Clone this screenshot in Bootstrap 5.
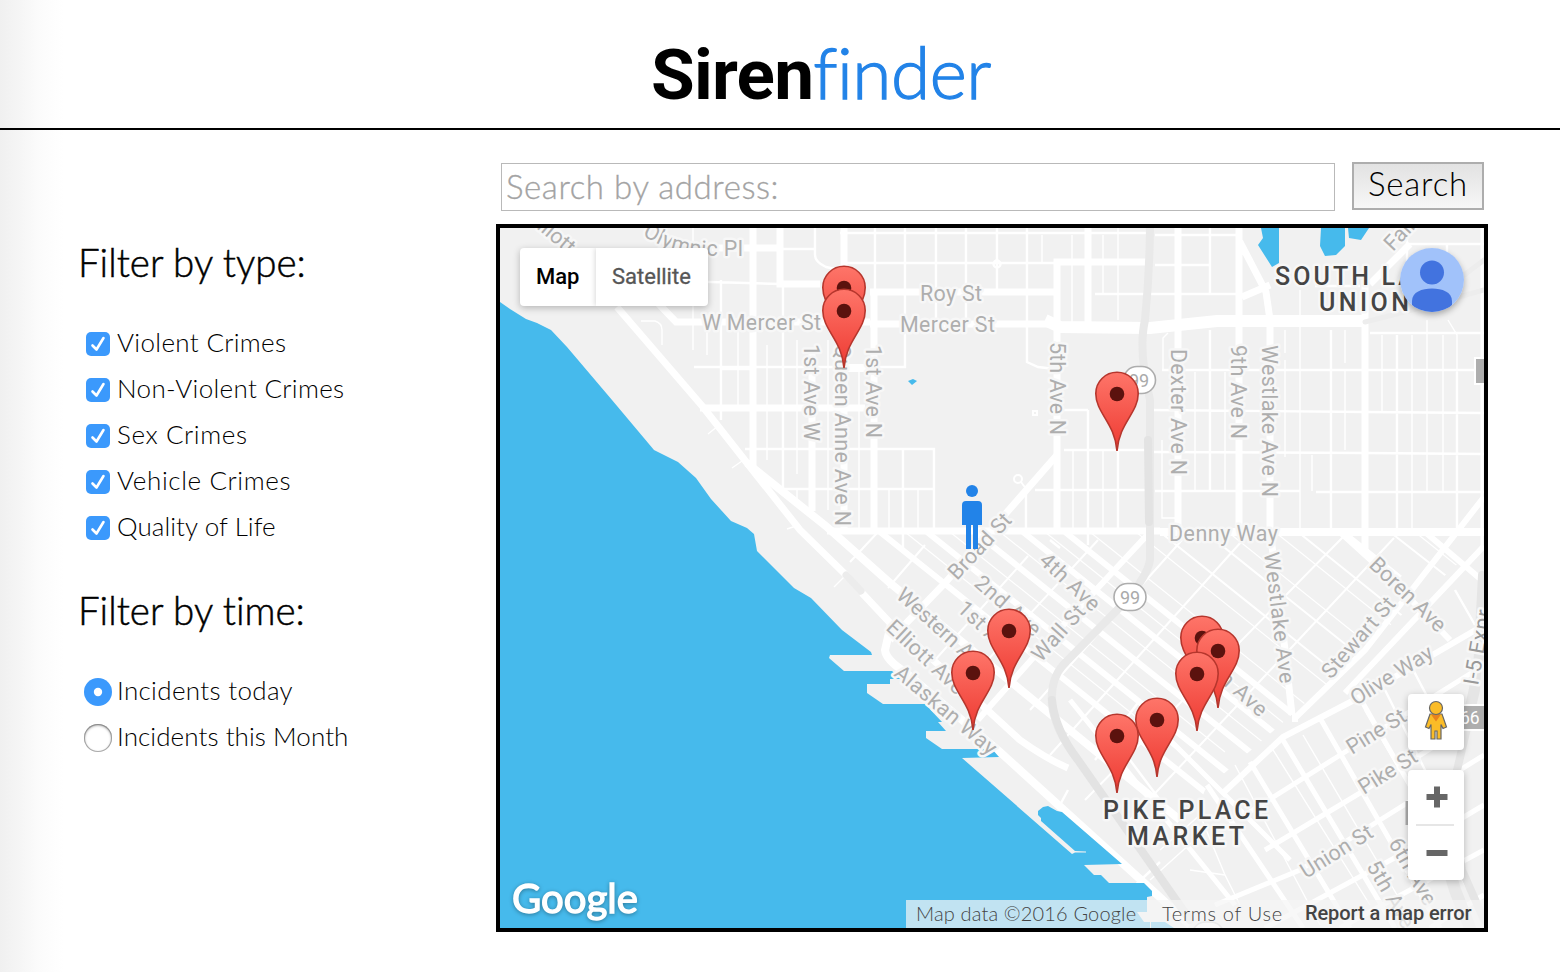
<!DOCTYPE html>
<html lang="en">
<head>
<meta charset="utf-8">
<meta name="viewport" content="width=device-width, initial-scale=1">
<title>Sirenfinder</title>
<link href="https://cdn.jsdelivr.net/npm/bootstrap@5.3.0/dist/css/bootstrap.min.css" rel="stylesheet">
<style>
  body{font-family:Lato,"Liberation Sans",sans-serif;font-weight:300;color:#000;height:972px;overflow:hidden;
    background:linear-gradient(90deg,#f0f0f0 0,#f5f5f5 18px,#fbfbfb 38px,#fff 64px)}
  .site-head{height:130px;border-bottom:2px solid #000;padding:30px 0 0 82px}
  .logo{font-size:71px;line-height:84px;white-space:nowrap}
  .logo b{font-family:Roboto,sans-serif;font-weight:700;letter-spacing:-.75px}
  .logo span{color:#2283e8;letter-spacing:-.4px;-webkit-text-stroke:1.3px #2283e8}
  .filters{width:496px;padding:107px 0 0 78px}
  .filters h2{font-size:38.5px;font-weight:300;line-height:50px;margin:0;letter-spacing:0;font-variant-ligatures:none;-webkit-text-stroke:.5px #000}
  .opts{padding:32px 0 0 6px}
  .opts + h2{margin-top:36px}
  .opt{height:46px;font-size:26px;line-height:46px;gap:5px;white-space:nowrap}
  .opt span{letter-spacing:.33px}
  .opt .wide{letter-spacing:.62px}
  .opt .tight{letter-spacing:.07px}
  .opt .form-check-input{width:24px;height:24px;margin:4px 2px 0;border:0;border-radius:5px;flex:none}
  .opt .form-check-input:checked{background-color:#3b99fc;background-size:24px 24px;
    background-image:url("data:image/svg+xml,%3Csvg xmlns='http://www.w3.org/2000/svg' viewBox='0 0 24 24'%3E%3Cpath d='M6.500 13.500l4 4L17.500 6' fill='none' stroke='%23fff' stroke-width='2.600' stroke-linecap='round' stroke-linejoin='round'/%3E%3C/svg%3E")}
  .opt .form-check-input[type=radio]{width:28px;height:28px;margin:4px 0 0;border-radius:50%;box-shadow:inset 0 1px 3px #777,inset 0 0 0 1px #b5b5b5}
  .opt .form-check-input[type=radio]:checked{box-shadow:none;background-size:28px 28px;
    background-image:url("data:image/svg+xml,%3Csvg xmlns='http://www.w3.org/2000/svg' viewBox='0 0 28 28'%3E%3Ccircle cx='14' cy='14' r='4.2' fill='%23fff'/%3E%3C/svg%3E")}
  .main-col{width:992px;padding-top:32px}
  .search-row{padding:0 4px 0 5px;height:62px}
  .search-row .form-control{width:834px;height:48px;margin-top:1px;border:1px solid #b9b9b9;border-radius:0;padding:0 4px 3px 4px;font-size:33px;font-weight:300;line-height:43px;letter-spacing:.57px;background:#fff}
  .search-row .form-control::placeholder{color:#a3a3a3;opacity:1;-webkit-text-stroke:.3px #a3a3a3}
  .search-row .btn{width:132px;height:48px;border:2px solid #adadad;border-radius:0;padding:0 0 5px;font-size:33px;font-weight:300;line-height:37px;letter-spacing:.8px;color:#000;background:linear-gradient(#e2e2e2,#f7f7f7)}
  .map-box{height:708px;border:4px solid #000;background:#f1f1f1}
  .street-map{display:block;width:984px;height:700px;font-weight:400}
  .map-type{left:20px;top:20px;height:58px;font-family:Roboto,sans-serif;font-size:22px;font-weight:500;line-height:57px;box-shadow:0 2px 7px rgba(0,0,0,.25);border-radius:4px;overflow:hidden;background:#fff}
  .map-type div:first-child{width:76px;padding-left:16px}
  .map-type div:last-child{width:112px;padding-left:16px;color:#565656;font-weight:400;-webkit-text-stroke:.3px #565656;box-shadow:-1px 0 5px rgba(0,0,0,.15)}
  .ctl{right:20px;width:56px;background:#fff;border-radius:4px;box-shadow:0 2px 7px rgba(0,0,0,.25)}
  .peg{top:466px;height:56px}
  .zoomer{top:542px;height:110px}
  .face{right:20px;top:20px;width:64px;height:64px;border-radius:50%;box-shadow:0 3px 6px rgba(0,0,0,.3);overflow:hidden}
  .credits{right:0;bottom:0;height:28px;font-size:20px;line-height:26px;color:#444;white-space:nowrap}
  .credits > div{background:rgba(245,245,245,.7);padding-left:10px}
  .c1{width:241px;letter-spacing:.15px}
  .c2{width:146px;padding-left:15px!important;letter-spacing:.7px}
  .c3{width:191px;padding-left:12px!important;font-family:Roboto,sans-serif;font-weight:500;letter-spacing:-.1px}
</style>
</head>
<body>
<header class="site-head text-center">
  <div class="logo"><b>Siren</b><span>finder</span></div>
</header>
<div class="d-flex">
  <aside class="filters flex-shrink-0">
    <h2>Filter by type:</h2>
    <div class="opts">
      <label class="opt d-flex align-items-center"><input class="form-check-input" type="checkbox" checked><span>Violent Crimes</span></label>
      <label class="opt d-flex align-items-center"><input class="form-check-input" type="checkbox" checked><span>Non-Violent Crimes</span></label>
      <label class="opt d-flex align-items-center"><input class="form-check-input" type="checkbox" checked><span class="wide">Sex Crimes</span></label>
      <label class="opt d-flex align-items-center"><input class="form-check-input" type="checkbox" checked><span class="wide">Vehicle Crimes</span></label>
      <label class="opt d-flex align-items-center"><input class="form-check-input" type="checkbox" checked><span class="tight">Quality of Life</span></label>
    </div>
    <h2>Filter by time:</h2>
    <div class="opts">
      <label class="opt d-flex align-items-center"><input class="form-check-input" type="radio" name="t" checked><span>Incidents today</span></label>
      <label class="opt d-flex align-items-center"><input class="form-check-input" type="radio" name="t"><span class="tight">Incidents this Month</span></label>
    </div>
  </aside>
  <main class="main-col flex-shrink-0">
    <form class="search-row d-flex justify-content-between align-items-start">
      <input class="form-control" type="text" placeholder="Search by address:">
      <button class="btn" type="button">Search</button>
    </form>
    <div class="map-box position-relative overflow-hidden">
      <svg class="street-map" viewBox="500 228 984 700" fill="none">
        <defs>
          <linearGradient id="pg" x1="0" y1="0" x2="0" y2="1"><stop offset="0" stop-color="#fe7569"/><stop offset="1" stop-color="#ee3a32"/></linearGradient>
          <g id="pin"><path d="M0 0C-2-28-21.200-38-21.200-57.500a21.200 21.200 0 0 1 42.400 0C21.200-38 2-28 0 0Z" fill="url(#pg)" stroke="#b6362d" stroke-width="1.600"/><circle cy="-57" r="7.300" fill="#5b120e"/></g>
          <clipPath id="bell"><path d="M827 530H1484V540L1295 712 1205 790 1170 880 1000 740 890 640Z"/></clipPath>
          <path id="oly" d="M642 235Q675 256 710 256H760"/>
        </defs>
        <rect x="500" y="228" width="984" height="700" fill="#f1f1f1"/>
        <!-- minor streets -->
        <g stroke="#fff" stroke-width="1.400">
          <path d="M693 228V350M767 345V460M797 340V474M828 340V510M859 370V530M1042 235V262M1072 235V322M1103 235V293M1118 228V320M641 321H655Q662 323 662 330V345M707 320V355M738 325V407M1285 330V353M1285 360V457M1300 290V530M1345 330V363M1382 335V412M1412 335V530M1427 320V492M1443 335V492M1195 372V492M1225 372V492M1162 440V518H1175M1163 370V338L1168 333M1345 370V450M708 434L718 426M732 468L742 461M787 529L796 526M834 587L845 576M1312 455V491"/>
          <path d="M1073 450V530M1103 450V530M889 490V530M918 490V530M1448 320L1457 335V372M797 490V500"/>
          <g clip-path="url(#bell)" stroke-width="1.200">
            <path d="M905 532l275 220M950 532l275 220M1000 532l275 220M1045 532l275 220M1090 532l230 184M1136 532l200 160M1228 532l150 120M1275 532l150 120M1415 532l150 120"/>
          </g>
          <path d="M1235 765L1320 925M1270 745L1370 905M1303 735L1400 900M1160 850L1200 815 1225 875M1150 880L1200 835M1190 870L1225 875 1240 905"/>
        </g>
        <!-- ordinary streets -->
        <g stroke="#fff" stroke-width="2.400">
          <path d="M721 280V420M783 285V490M905 228V367H880M875 228V293M936 228V320M966 228V320M997 228V290M1027 228V362L1038 367 1055 369M840 233H1150M844 263H1057M605 279L780 284M694 367H905M745 449H934V530M783 489H933M903 450V550M1088 410V530M1118 450V530M1064 410H1088M1064 450H1145M1035 490H1145M815 228V255Q815 262 826 267L840 270M783 249H815M721 369H753M1150 294H1240M1155 265H1210M1155 235H1239M1210 228V294M1210 330V492M1162 370H1484M1150 410L1365 412 1484 413M1154 452L1365 453 1484 454M1155 491H1300M1316 492H1484M1331 330V530M1397 335V530M1457 372V530M1370 333H1484M1095 294H1150M1407 228V244H1484M1407 244V300M1447 244V262M1315 286H1360M1026 490V530M1050 540L1060 548M1088 530V545"/>
          <path d="M1482 228V550" stroke-width="3"/>
          <circle cx="997" cy="264" r="3.500"/><circle cx="1018" cy="479" r="4" stroke-width="2"/><path d="M1021 482L1027 490M1033 411h4v4h-4z" stroke-width="2"/>
          <g clip-path="url(#bell)" stroke-width="2">
            <path d="M878 532L850 562M925 545L888 588M1028 556L935 660M1098 540L960 690M1182 540L1030 710M1250 532L1050 755M1344 536L1085 800M1394 538L1130 820"/>
            <path d="M1160 532L1340 676M1205 532L1370 664M1298 532L1420 630M1390 532L1500 618"/>
          </g>
          <path d="M1385 690L1440 800M1408 660L1450 740M1455 590L1475 625M1365 710L1400 770M1160 800L1130 760M1095 760L1140 700M1060 805L1068 790M1130 890L1160 862"/>
        </g>
        <!-- arterial streets -->
        <g stroke="#fff" stroke-width="7">
          <path d="M753 228V470M812 350V511M844 228V530M874 292V530M780 228V284H820M700 248H783M655 300L676 322H870M870 292H1057M870 324H1050M700 408H865M827 531H1160M1057 530V262H1150M1088 228V322M1178 228V530M1239 228V530M1239 240L1266 292 1270 320V530L1285 650 1292 715M1242 297L1270 285M1365 280V555M1370 284L1410 244"/>
          <path d="M1057 455L945 583 890 640"/>
          <path d="M1160 532H1484M844 368H870" stroke-width="8"/>
          <path d="M1045 320L1060 327 1150 328 1217 321H1365" stroke-width="12"/>
          <path d="M617 307L703 407 747 463 800 530 848 577M862 593L892 625"/>
          <path d="M747 463L827 527 890 583 1060 722 1180 820" stroke-width="8"/>
          <path d="M892 620L885 650Q886 660 905 672L1000 752 1152 890 1190 925" stroke-width="8"/>
          <path d="M892 622L1020 740Q1045 758 1068 768"/>
          <g clip-path="url(#bell)" stroke-width="6">
            <path d="M880 532L1220 804M927 532L1267 804M975 532L1315 804M1023 532L1363 804M1065 532L1405 804M1340 530L1400 578"/>
            <path d="M1150 532L1040 650 960 740"/>
          </g>
          <path d="M1340 532L1385 573 1450 640M1425 532L1484 582M1295 718L1365 650 1484 497M1345 693L1484 546M1223 793L1283 737 1360 697 1484 625M1295 715V722" stroke-width="6"/>
          <path d="M1240 818L1345 752 1484 665M1265 850L1360 793 1484 715M1215 905L1300 870 1380 820 1484 755M1265 928L1400 855 1484 805M1340 928L1484 850M1430 928L1484 895" stroke-width="5"/>
          <path d="M1207 785L1303 928M1250 762L1350 928M1283 740L1395 928M1320 718L1440 928M1360 698L1470 890M1070 700L1235 905M1170 740L1290 860" stroke-width="5"/>
        </g>
        <!-- highway and tunnels -->
        <g stroke="#e9e9e9" stroke-width="8" stroke-linecap="round" stroke-linejoin="round">
          <path d="M1150 220Q1150 270 1145 320 1138 350 1150 400V560Q1148 575 1125 602L1063 665Q1050 680 1052 705 1055 730 1078 760L1190 920"/>
          <path d="M1148 440L1149 522M1052 700Q1055 730 1078 760L1190 920" stroke="#e3e3e3"/>
          <path d="M846 575L861 591" stroke="#ececec" stroke-width="7"/>
          <path d="M1365 322L1420 308 1484 260M1420 308L1484 290" stroke="#ededed" stroke-width="5"/>
          <path d="M1482 575L1476 690 1450 800 1462 870 1484 920M1484 640L1466 720" stroke="#e5e5e5"/>
          <path d="M1450 780Q1435 830 1455 890L1470 928" stroke-width="12" stroke="#e8e8e8"/>
        </g>
        <!-- water -->
        <g fill="#46baec">
          <path d="M500 302L510 309 526 319 537 323 551 330 567 347 612 400 654 450 678 462 696 478 711 499 731 521 747 528 754 534 757 551 794 588 811 598 842 630 871 652 872 655H830L829 658 844 671H892L902 679H890V684H867V693L883 704H925L942 722H938L946 731H926V738L942 749H992L999 757 962 758 1072 854 1075 852.500H1086V851.500L1075 851 1041 821V818L1038 815V811L1043 807 1048 806 1057 811 1062 812 1122 864 1084 865 1094 875H1101L1109 883H1144L1152 891V896L1147 897V912H1137L1144 922H1150V928H500Z"/>
          <path d="M1151 922H1165L1174 928H1151ZM1261 228H1279V263L1272 267 1258 245 1263 238ZM1321 228H1345V246L1336 255 1325 256 1320 246ZM1348 228H1369L1361 240 1349 238Z"/>
          <path d="M908 381L913 379 917 381 912 385Z"/>
        </g>
        <!-- route shields -->
        <g fill="#fff" stroke="#adadad" stroke-width="1.600"><rect x="1123.500" y="366.500" width="32" height="27" rx="13.500"/><rect x="1114" y="583.500" width="32" height="27" rx="13.500"/><rect x="1192" y="922" width="32" height="27" rx="13.500" stroke="#ccc"/></g>
        <rect x="1475" y="358" width="14" height="26" fill="#aeaeae" stroke="#fff" stroke-width="2"/>
        <rect x="1440" y="705" width="50" height="25" fill="#aeaeae" stroke="#fff" stroke-width="2"/>
        <path d="M1407 801V825" stroke="#aeaeae" stroke-width="3"/>
        <!-- street names -->
        <g font-family="Roboto,sans-serif" font-size="21.500" fill="#aeaeae" stroke="#f7f7f7" stroke-width="5" stroke-linejoin="round" paint-order="stroke">
          <text x="920" y="301" textLength="62">Roy St</text>
          <text x="900" y="332" textLength="95">Mercer St</text>
          <text x="702" y="330" textLength="119">W Mercer St</text>
          <text x="1169" y="541" textLength="109">Denny Way</text>
          <text><textPath href="#oly" textLength="105">Olympic Pl</textPath></text>
          <text transform="translate(536 228) rotate(40)">lliott</text>
          <text transform="translate(804 344) rotate(90)" textLength="97">1st Ave W</text>
          <text transform="translate(835 344) rotate(90)" textLength="182">Queen Anne Ave N</text>
          <text transform="translate(866 345) rotate(90)" textLength="93">1st Ave N</text>
          <text transform="translate(1050 342) rotate(90)" textLength="93">5th Ave N</text>
          <text transform="translate(1170.500 349) rotate(90)" textLength="126">Dexter Ave N</text>
          <text transform="translate(1231 345) rotate(90)" textLength="94">9th Ave N</text>
          <text transform="translate(1262 345) rotate(90)" textLength="152">Westlake Ave N</text>
          <text transform="translate(1264 553) rotate(83)" textLength="132">Westlake Ave</text>
          <text transform="translate(957 581) rotate(-47)" textLength="82">Broad St</text>
          <text transform="translate(973 585) rotate(41)" textLength="80">2nd Ave</text>
          <text transform="translate(956 610) rotate(43)" textLength="72">1st Ave</text>
          <text transform="translate(1038 562) rotate(43)" textLength="74">4th Ave</text>
          <text transform="translate(895 597) rotate(42)" textLength="116">Western Ave</text>
          <text transform="translate(885 629) rotate(43)" textLength="98">Elliott Ave</text>
          <text transform="translate(893 675) rotate(40)" textLength="126">Alaskan Way</text>
          <text transform="translate(1041 663) rotate(-48)" textLength="68">Wall St</text>
          <text transform="translate(1368 566) rotate(44)" textLength="97">Boren Ave</text>
          <text transform="translate(1331 680) rotate(-49)" textLength="100">Stewart St</text>
          <text transform="translate(1356 706) rotate(-32)" textLength="93">Olive Way</text>
          <text transform="translate(1352 755) rotate(-32)" textLength="66">Pine St</text>
          <text transform="translate(1364 795) rotate(-32)" textLength="65">Pike St</text>
          <text transform="translate(1306 879) rotate(-32)" textLength="81">Union St</text>
          <text transform="translate(1212 675) rotate(42)" textLength="64">th Ave</text>
          <text transform="translate(1388 843) rotate(60)" textLength="74">6th Ave</text>
          <text transform="translate(1366 866) rotate(60)" textLength="74">5th Ave</text>
          <text transform="translate(1478 686) rotate(-80)" textLength="76" fill="#999">I-5 Expr</text>
          <text transform="translate(1393 252) rotate(-47)">Fair</text>
        </g>
        <g font-family="Roboto,sans-serif" font-size="18" fill="#aaa"><text x="1129" y="387">99</text><text x="1120" y="603.500">99</text><text x="1460" y="724" fill="#fff" font-size="17.500">66</text></g>
        <g font-family="Roboto,sans-serif" font-size="25" font-weight="500" fill="#444" stroke="#f7f7f7" stroke-width="5" stroke-linejoin="round" paint-order="stroke">
          <text x="1275" y="285" textLength="176">SOUTH LAKE</text>
          <text x="1319" y="311" textLength="90">UNION</text>
          <text x="1103" y="819" textLength="165">PIKE PLACE</text>
          <text x="1127" y="845" textLength="117">MARKET</text>
        </g>
        <!-- current position -->
        <g fill="#2283e8"><circle cx="972" cy="491" r="6"/><path d="M966 501h12q4 0 4 4v20h-4v24h-5v-24h-2v24h-5v-24h-4v-20q0-4 4-4Z"/></g>
        <!-- incidents -->
        <use href="#pin" x="844" y="345"/><use href="#pin" x="844" y="368"/>
        <use href="#pin" x="1117" y="451"/>
        <use href="#pin" x="1009" y="688"/><use href="#pin" x="973" y="730"/>
        <use href="#pin" x="1202" y="695"/><use href="#pin" x="1218" y="708"/><use href="#pin" x="1197" y="731"/>
        <use href="#pin" x="1157" y="777"/><use href="#pin" x="1117" y="793"/>
        <text x="512" y="913" font-family="Lato,sans-serif" font-size="41" font-weight="400" fill="#fff" stroke="#fff" stroke-width="1.400" textLength="126" lengthAdjust="spacingAndGlyphs" style="filter:drop-shadow(0 1px 2px rgba(0,0,0,.35))">Google</text>
      </svg>
      <div class="map-type position-absolute d-flex"><div>Map</div><div>Satellite</div></div>
      <svg class="face position-absolute" viewBox="0 0 64 64"><rect width="64" height="64" fill="#a1c2fa"/><circle cx="32" cy="24.500" r="12" fill="#4273df"/><path d="M12 64V53C12 44 22 40.500 32 40.500S52 44 52 53V64Z" fill="#4273df"/></svg>
      <div class="ctl peg position-absolute"><svg width="56" height="56" viewBox="0 0 56 56" stroke="#666" stroke-width="1.200" fill="#fbbc27"><path d="M22 20h12l4.500 13-3.500 1.500-2-4V45h-4V37h-2v8h-4V30.500l-2 4-3.500-1.500Z"/><path d="M23 20.500h10l-5 7Z" fill="#e8821e" stroke="none"/><circle cx="28" cy="14" r="6.500"/></svg></div>
      <div class="ctl zoomer position-absolute"><svg width="56" height="110" viewBox="0 0 56 110"><path d="M18.500 27h21M29 16.500v21M18.500 83h21" stroke="#666" stroke-width="6"/><path d="M8 55H46" stroke="#e6e6e6" stroke-width="2"/></svg></div>
      <div class="credits position-absolute d-flex"><div class="c1">Map data ©2016 Google</div><div class="c2">Terms of Use</div><div class="c3">Report a map error</div></div>
    </div>
  </main>
</div>
<script src="https://cdn.jsdelivr.net/npm/bootstrap@5.3.0/dist/js/bootstrap.bundle.min.js"></script>
</body>
</html>
